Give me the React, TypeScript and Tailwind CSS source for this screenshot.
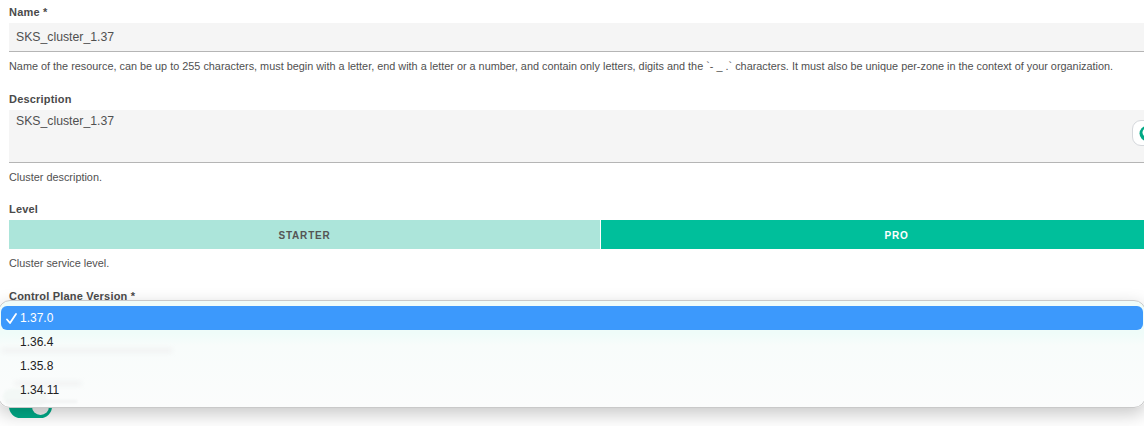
const font = "font-['Liberation_Sans',Arial,sans-serif]";

function Label({ children }: { children: React.ReactNode }) {
  return <div className="text-[11px] leading-[13px] font-bold tracking-[0.2px] text-[#4a4a4a]">{children}</div>;
}

function Help({ children }: { children: React.ReactNode }) {
  return <p className="whitespace-nowrap text-[10.87px] leading-[13px] text-[#505050]">{children}</p>;
}

const versions = ["1.36.4", "1.35.8", "1.34.11"];

export default function App() {
  return (
    <div className={`${font} relative h-[426px] w-[1144px] overflow-hidden bg-white`}>
      <div className="flex w-[1192px] flex-col pl-[9px] pt-[6px]">
        <Label>Name *</Label>
        <div className="mt-[4px] flex h-[29px] items-center border-b border-[#b5b5b5] bg-[#f5f5f5] px-[7px] text-[12.25px] text-[#505050]">
          SKS_cluster_1.37
        </div>
        <div className="mt-[8px]">
          <Help>
            Name of the resource, can be up to 255 characters, must begin with a letter, end with a letter or a number, and contain only letters, digits and the `- _ .` characters. It must also be unique per-zone in the context of your organization.
          </Help>
        </div>

        <div className="mt-[20px]">
          <Label>Description</Label>
        </div>
        <div className="relative mt-[4px] h-[53px] overflow-hidden border-b border-[#b5b5b5] bg-[#f5f5f5] px-[7px] pt-[4px] text-[12.25px] leading-[15px] text-[#505050]">
          SKS_cluster_1.37
          <div className="absolute left-[1123px] top-[10px] h-[26px] w-[40px] rounded-[9px] border border-[#d5d8dc] bg-white">
            <svg className="absolute left-[6px] top-[5px]" width="20" height="18" viewBox="0 0 20 18">
              <circle cx="8" cy="7.5" r="7.5" fill="#00a884" />
              <circle cx="8" cy="6.5" r="4.5" fill="white" />
              <path d="M5 14h6v3H5z" fill="#00a884" />
            </svg>
          </div>
        </div>
        <div className="mt-[8px]">
          <Help>Cluster description.</Help>
        </div>

        <div className="mt-[19px]">
          <Label>Level</Label>
        </div>
        <div className="mt-[4px] flex h-[29px] gap-px text-[10px] font-bold tracking-[0.8px]">
          <div className="flex flex-1 items-center justify-center bg-[#ace5da] pt-px text-[#555]">STARTER</div>
          <div className="flex flex-1 items-center justify-center bg-[#00bf9b] pt-px text-white">PRO</div>
        </div>
        <div className="mt-[8px]">
          <Help>Cluster service level.</Help>
        </div>

        <div className="mt-[20px]">
          <Label>Control Plane Version *</Label>
        </div>

        {/* toggle further down the form, mostly under the menu */}
        <div className="mt-[92px] flex h-[23px] w-[43px] items-center justify-end rounded-full bg-[#00ab88] px-[3px]">
          <div className="h-[17px] w-[17px] rounded-full bg-[#f1f1f1]" />
        </div>
      </div>

      {/* native select menu */}
      <div className="absolute left-[-2px] top-[300px] h-[108px] w-[1148px] overflow-hidden rounded-[12px] border border-[#c9c9c9] bg-[linear-gradient(to_bottom,#effcf9_30%,#f8fcfb_42%,#fbfcfc_100%)] px-[2px] pt-[5px] text-[12px] text-[#222] shadow-[0_6px_18px_rgba(0,0,0,0.22)]">
        {/* ghosts of the form showing through the vibrancy */}
        <div className="absolute left-[3px] top-[47px] h-[5px] w-[170px] bg-[#f1f3f3] blur-[2px]" />
        <div className="absolute left-[16px] top-[80px] h-[5px] w-[66px] bg-[#f1f3f3] blur-[2px]" />
        <div className="absolute left-[4px] top-[88px] h-[16px] w-[44px] rounded-full bg-[#f3f8f6] blur-[1px]" />
        <div className="absolute left-[8px] top-[99px] h-[3px] w-[70px] bg-[#f1f3f3] blur-[1px]" />

        <div className="relative flex h-[24px] items-center rounded-[6px] bg-[#3c99fc] pl-[19px] text-white">
          <svg className="absolute left-[5px] top-[7px]" width="11" height="11" viewBox="0 0 11 11" fill="none">
            <path d="M1 6.5 4 10 10 1" stroke="white" strokeWidth="1.8" strokeLinecap="round" strokeLinejoin="round" />
          </svg>
          1.37.0
        </div>
        {versions.map((v) => (
          <div key={v} className="relative flex h-[24px] items-center pl-[19px]">
            {v}
          </div>
        ))}
      </div>
    </div>
  );
}
